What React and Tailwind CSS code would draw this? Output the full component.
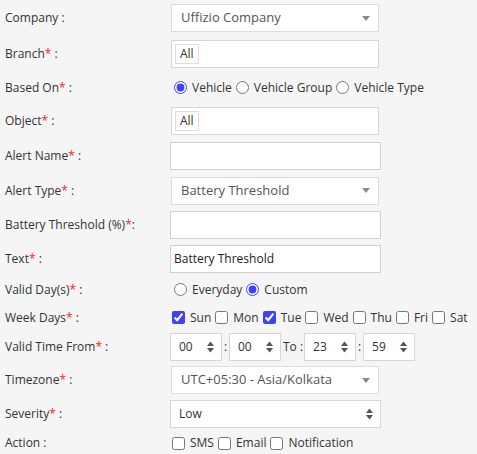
import React from "react";

const Req = () => <span className="text-[#ff2020]">*</span>;

const Label = ({ text, req, tight }) => (
  <div className="w-[170px] shrink-0 pl-[5px] text-[12px] text-[#333]">
    {text}
    {req && <Req />}
    {tight ? ":" : " :"}
  </div>
);

const Row = ({ h, children }) => (
  <div className={`flex items-center ${h}`}>{children}</div>
);

const Caret = () => (
  <svg width="8" height="5" viewBox="0 0 8 5" className="shrink-0">
    <path d="M0 0 L8 0 L4 5 Z" fill="#8a8a8a" />
  </svg>
);

const Spin = () => (
  <svg width="7" height="12" viewBox="0 0 7 12" className="shrink-0">
    <path d="M0 5 L7 5 L3.5 0.5 Z" fill="#555" />
    <path d="M0 7 L7 7 L3.5 11.5 Z" fill="#555" />
  </svg>
);

const Select = ({ value }) => (
  <div className="ml-px flex h-[28px] w-[208px] items-center justify-between border border-[#dcdcdc] bg-white pl-[9px] pr-[8px] text-[13px] text-[#555]">
    <span>{value}</span>
    <Caret />
  </div>
);

const Input = ({ value }) => (
  <div className="flex h-[28px] w-[211px] items-center border border-[#d0d0d0] bg-white px-[3px] text-[12px] text-[#222]">
    {value}
  </div>
);

const Chip = () => (
  <div className="ml-px flex h-[28px] w-[208px] items-center border border-[#d6d6d6] bg-white pl-[3px]">
    <span className="flex h-[20px] items-center border border-[#dedede] px-[4px] text-[12px] text-[#333]">
      All
    </span>
  </div>
);

const Radio = ({ label, checked }) => (
  <label className="flex items-center">
    <input
      type="radio"
      readOnly
      checked={checked}
      className="ml-[4px] mr-[5px] h-[13px] w-[13px] accent-[#4040ff]"
    />
    <span className="text-[12px] text-[#333]">{label}</span>
  </label>
);

const Check = ({ label, checked }) => (
  <label className="flex items-center">
    <input
      type="checkbox"
      readOnly
      checked={checked}
      className="ml-[2px] mr-[5px] h-[13px] w-[13px] accent-[#4040ff]"
    />
    <span className="mr-[2px] text-[12px] text-[#333]">{label}</span>
  </label>
);

const TimeBox = ({ value }) => (
  <div className="flex h-[28px] w-[52px] items-center justify-between border border-[#d6d6d6] bg-white pl-[8px] pr-[7px] text-[12px] text-[#333]">
    <span>{value}</span>
    <Spin />
  </div>
);

export default function App() {
  return (
    <div
      className="h-[454px] w-[477px] overflow-hidden bg-[#f5f5f5]"
      style={{ fontFamily: "'Open Sans', 'Liberation Sans', sans-serif" }}
    >
      <Row h="h-[35px] pt-[1px]">
        <Label text="Company" />
        <Select value="Uffizio Company" />
      </Row>
      <Row h="h-[36px] pt-[1px]">
        <Label text="Branch" req />
        <Chip />
      </Row>
      <Row h="h-[33px]">
        <Label text="Based On" req />
        <div className="flex items-center">
          <Radio label="Vehicle" checked />
          <Radio label="Vehicle Group" />
          <Radio label="Vehicle Type" />
        </div>
      </Row>
      <Row h="h-[34px]">
        <Label text="Object" req />
        <Chip />
      </Row>
      <Row h="h-[35px]">
        <Label text="Alert Name" req />
        <Input value="" />
      </Row>
      <Row h="h-[35px]">
        <Label text="Alert Type" req />
        <Select value="Battery Threshold" />
      </Row>
      <Row h="h-[34px]">
        <Label text="Battery Threshold (%)" req tight />
        <Input value="" />
      </Row>
      <Row h="h-[33px]">
        <Label text="Text" req />
        <Input value="Battery Threshold" />
      </Row>
      <Row h="h-[29px]">
        <Label text="Valid Day(s)" req />
        <div className="flex items-center">
          <Radio label="Everyday" />
          <Radio label="Custom" checked />
        </div>
      </Row>
      <Row h="h-[27px]">
        <Label text="Week Days" req />
        <div className="flex items-center">
          <Check label="Sun" checked />
          <Check label="Mon" />
          <Check label="Tue" checked />
          <Check label="Wed" />
          <Check label="Thu" />
          <Check label="Fri" />
          <Check label="Sat" />
        </div>
      </Row>
      <Row h="h-[31px]">
        <Label text="Valid Time From" req />
        <div className="flex items-center text-[12px] text-[#333]">
          <TimeBox value="00" />
          <span className="w-[7px] text-center">:</span>
          <TimeBox value="00" />
          <span className="pl-[2px] pr-px">To :</span>
          <TimeBox value="23" />
          <span className="w-[7px] text-center">:</span>
          <TimeBox value="59" />
        </div>
      </Row>
      <Row h="h-[36px]">
        <Label text="Timezone" req />
        <Select value="UTC+05:30 - Asia/Kolkata" />
      </Row>
      <Row h="h-[32px]">
        <Label text="Severity" req />
        <div className="flex h-[28px] w-[211px] items-center justify-between border border-[#d6d6d6] bg-white pl-[8px] pr-[7px] text-[12px] text-[#333]">
          <span>Low</span>
          <Spin />
        </div>
      </Row>
      <Row h="h-[26px]">
        <Label text="Action" />
        <div className="flex items-center">
          <Check label="SMS" />
          <Check label="Email" />
          <Check label="Notification" />
        </div>
      </Row>
    </div>
  );
}
